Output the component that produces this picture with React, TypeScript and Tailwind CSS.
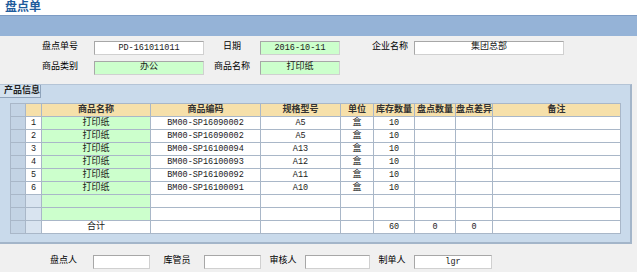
const rows = [
  { no: "1", code: "BM00-SP16090002", spec: "A5" },
  { no: "2", code: "BM00-SP16090002", spec: "A5" },
  { no: "3", code: "BM00-SP16100094", spec: "A13" },
  { no: "4", code: "BM00-SP16100093", spec: "A12" },
  { no: "5", code: "BM00-SP16100092", spec: "A11" },
  { no: "6", code: "BM00-SP16100091", spec: "A10" },
];

const td = "h-[13px] p-0 border border-[#a9b7c8] text-center leading-[12px] text-[#1a1a1a]";
const th = "h-[13px] p-0 border border-[#a9b7c8] bg-[#f6e0aa] text-center leading-[12px] font-bold text-[#333]";

function Field({ value, green, w, mono }: { value: string; green?: boolean; w: string; mono?: boolean }) {
  return (
    <div
      className={`${w} h-[14px] border border-[#a7a7a7] border-b-[#d0d0d0] border-r-[#d0d0d0] flex items-center justify-center ${
        green ? "bg-[#ccffcc]" : "bg-white"
      } ${mono ? "text-[8.5px]" : "text-[9px]"} text-[#1a1a1a]`}
    >
      {value}
    </div>
  );
}

export default function App() {
  return (
    <div
      className="w-[641px] h-[280px] bg-white overflow-hidden text-[9px]"
      style={{ fontFamily: '"Liberation Mono", "Noto Sans CJK SC", monospace' }}
    >
      <div className="w-[637px]">
        {/* title */}
        <div className="h-[15px] pl-[5px] pt-[1px] text-[12px] font-bold leading-[14px] text-[#1f5c9c]">盘点单</div>
        {/* band */}
        <div className="h-[21px] bg-[#95b3d7] border-t border-[#7d9cc4]" />

        {/* form area */}
        <div className="bg-[#f0f0f0] pt-[5px] pb-[3px]">
          <div className="flex items-center h-[14px]">
            <div className="w-[90px] pl-[30px] text-center">盘点单号</div>
            <div className="w-[4px]" />
            <Field value="PD-161011011" w="w-[110px]" mono />
            <div className="w-[56px] text-center">日期</div>
            <Field value="2016-10-11" w="w-[80px]" green mono />
            <div className="w-[74px] text-right pr-[6px]">企业名称</div>
            <Field value="集团总部" w="w-[150px]" />
          </div>
          <div className="flex items-center h-[14px] mt-[6px]">
            <div className="w-[90px] pl-[30px] text-center">商品类别</div>
            <div className="w-[4px]" />
            <Field value="办公" w="w-[110px]" green />
            <div className="w-[56px] text-center">商品名称</div>
            <Field value="打印纸" w="w-[80px]" green />
          </div>

          {/* panel */}
          <div className="mt-[9px] w-[632px] h-[160px] bg-[#c9daeb] border-t border-[#b4c4d6] border-r-2 border-b-2 border-r-[#a3b5c9] border-b-[#a3b5c9]">
            <div className="w-[41px] h-[13px] border-r border-b border-[#8fa3ba] bg-[#d3e1ee] font-bold leading-[12px] text-[#222] pl-[4px]">
              产品信息
            </div>
            <div className="pl-[10px] pt-[5px]">
              <table className="table-fixed border-collapse w-[610px]">
                <colgroup>
                  <col className="w-[15px]" />
                  <col className="w-[16px]" />
                  <col className="w-[109px]" />
                  <col className="w-[110px]" />
                  <col className="w-[80px]" />
                  <col className="w-[33px]" />
                  <col className="w-[41px]" />
                  <col className="w-[41px]" />
                  <col className="w-[37px]" />
                  <col className="w-[128px]" />
                </colgroup>
                <tbody>
                  <tr>
                    <td className={`${td} bg-[#c3d3e4]`} />
                    <td className={th} />
                    <td className={th}>商品名称</td>
                    <td className={th}>商品编码</td>
                    <td className={th}>规格型号</td>
                    <td className={th}>单位</td>
                    <td className={th}>库存数量</td>
                    <td className={th}>盘点数量</td>
                    <td className={th}>盘点差异</td>
                    <td className={th}>备注</td>
                  </tr>
                  {rows.map((r) => (
                    <tr key={r.no}>
                      <td className={`${td} bg-[#c3d3e4]`} />
                      <td className={`${td} bg-white text-[8.5px]`}>{r.no}</td>
                      <td className={`${td} bg-[#ccffcc]`}>打印纸</td>
                      <td className={`${td} bg-white text-[8.5px]`}>{r.code}</td>
                      <td className={`${td} bg-white text-[8.5px]`}>{r.spec}</td>
                      <td className={`${td} bg-white`}>盒</td>
                      <td className={`${td} bg-white text-[8.5px]`}>10</td>
                      <td className={`${td} bg-white`} />
                      <td className={`${td} bg-white`} />
                      <td className={`${td} bg-white`} />
                    </tr>
                  ))}
                  {[0, 1].map((i) => (
                    <tr key={i}>
                      <td className={`${td} bg-[#c3d3e4]`} />
                      <td className={`${td} bg-[#d9e4f0]`} />
                      <td className={`${td} bg-[#ccffcc]`} />
                      <td className={`${td} bg-white`} />
                      <td className={`${td} bg-white`} />
                      <td className={`${td} bg-white`} />
                      <td className={`${td} bg-white`} />
                      <td className={`${td} bg-white`} />
                      <td className={`${td} bg-white`} />
                      <td className={`${td} bg-white`} />
                    </tr>
                  ))}
                  <tr>
                    <td className={`${td} bg-[#c3d3e4]`} />
                    <td className={`${td} bg-[#d9e4f0]`} />
                    <td className={`${td} bg-white`}>合计</td>
                    <td className={`${td} bg-white`} />
                    <td className={`${td} bg-white`} />
                    <td className={`${td} bg-white`} />
                    <td className={`${td} bg-white text-[8.5px]`}>60</td>
                    <td className={`${td} bg-white text-[8.5px]`}>0</td>
                    <td className={`${td} bg-white text-[8.5px]`}>0</td>
                    <td className={`${td} bg-white`} />
                  </tr>
                </tbody>
              </table>
            </div>
          </div>

          {/* signatures */}
          <div className="flex items-center h-[14px] mt-[11px]">
            <div className="w-[87px] pl-[40px] text-center">盘点人</div>
            <div className="w-[6px]" />
            <Field value="" w="w-[57px]" />
            <div className="w-[54px] text-center">库管员</div>
            <Field value="" w="w-[57px]" />
            <div className="w-[44px] text-center">审核人</div>
            <Field value="" w="w-[65px]" />
            <div className="w-[44px] text-center">制单人</div>
            <Field value="lgr" w="w-[78px]" mono />
          </div>
        </div>
      </div>
    </div>
  );
}
